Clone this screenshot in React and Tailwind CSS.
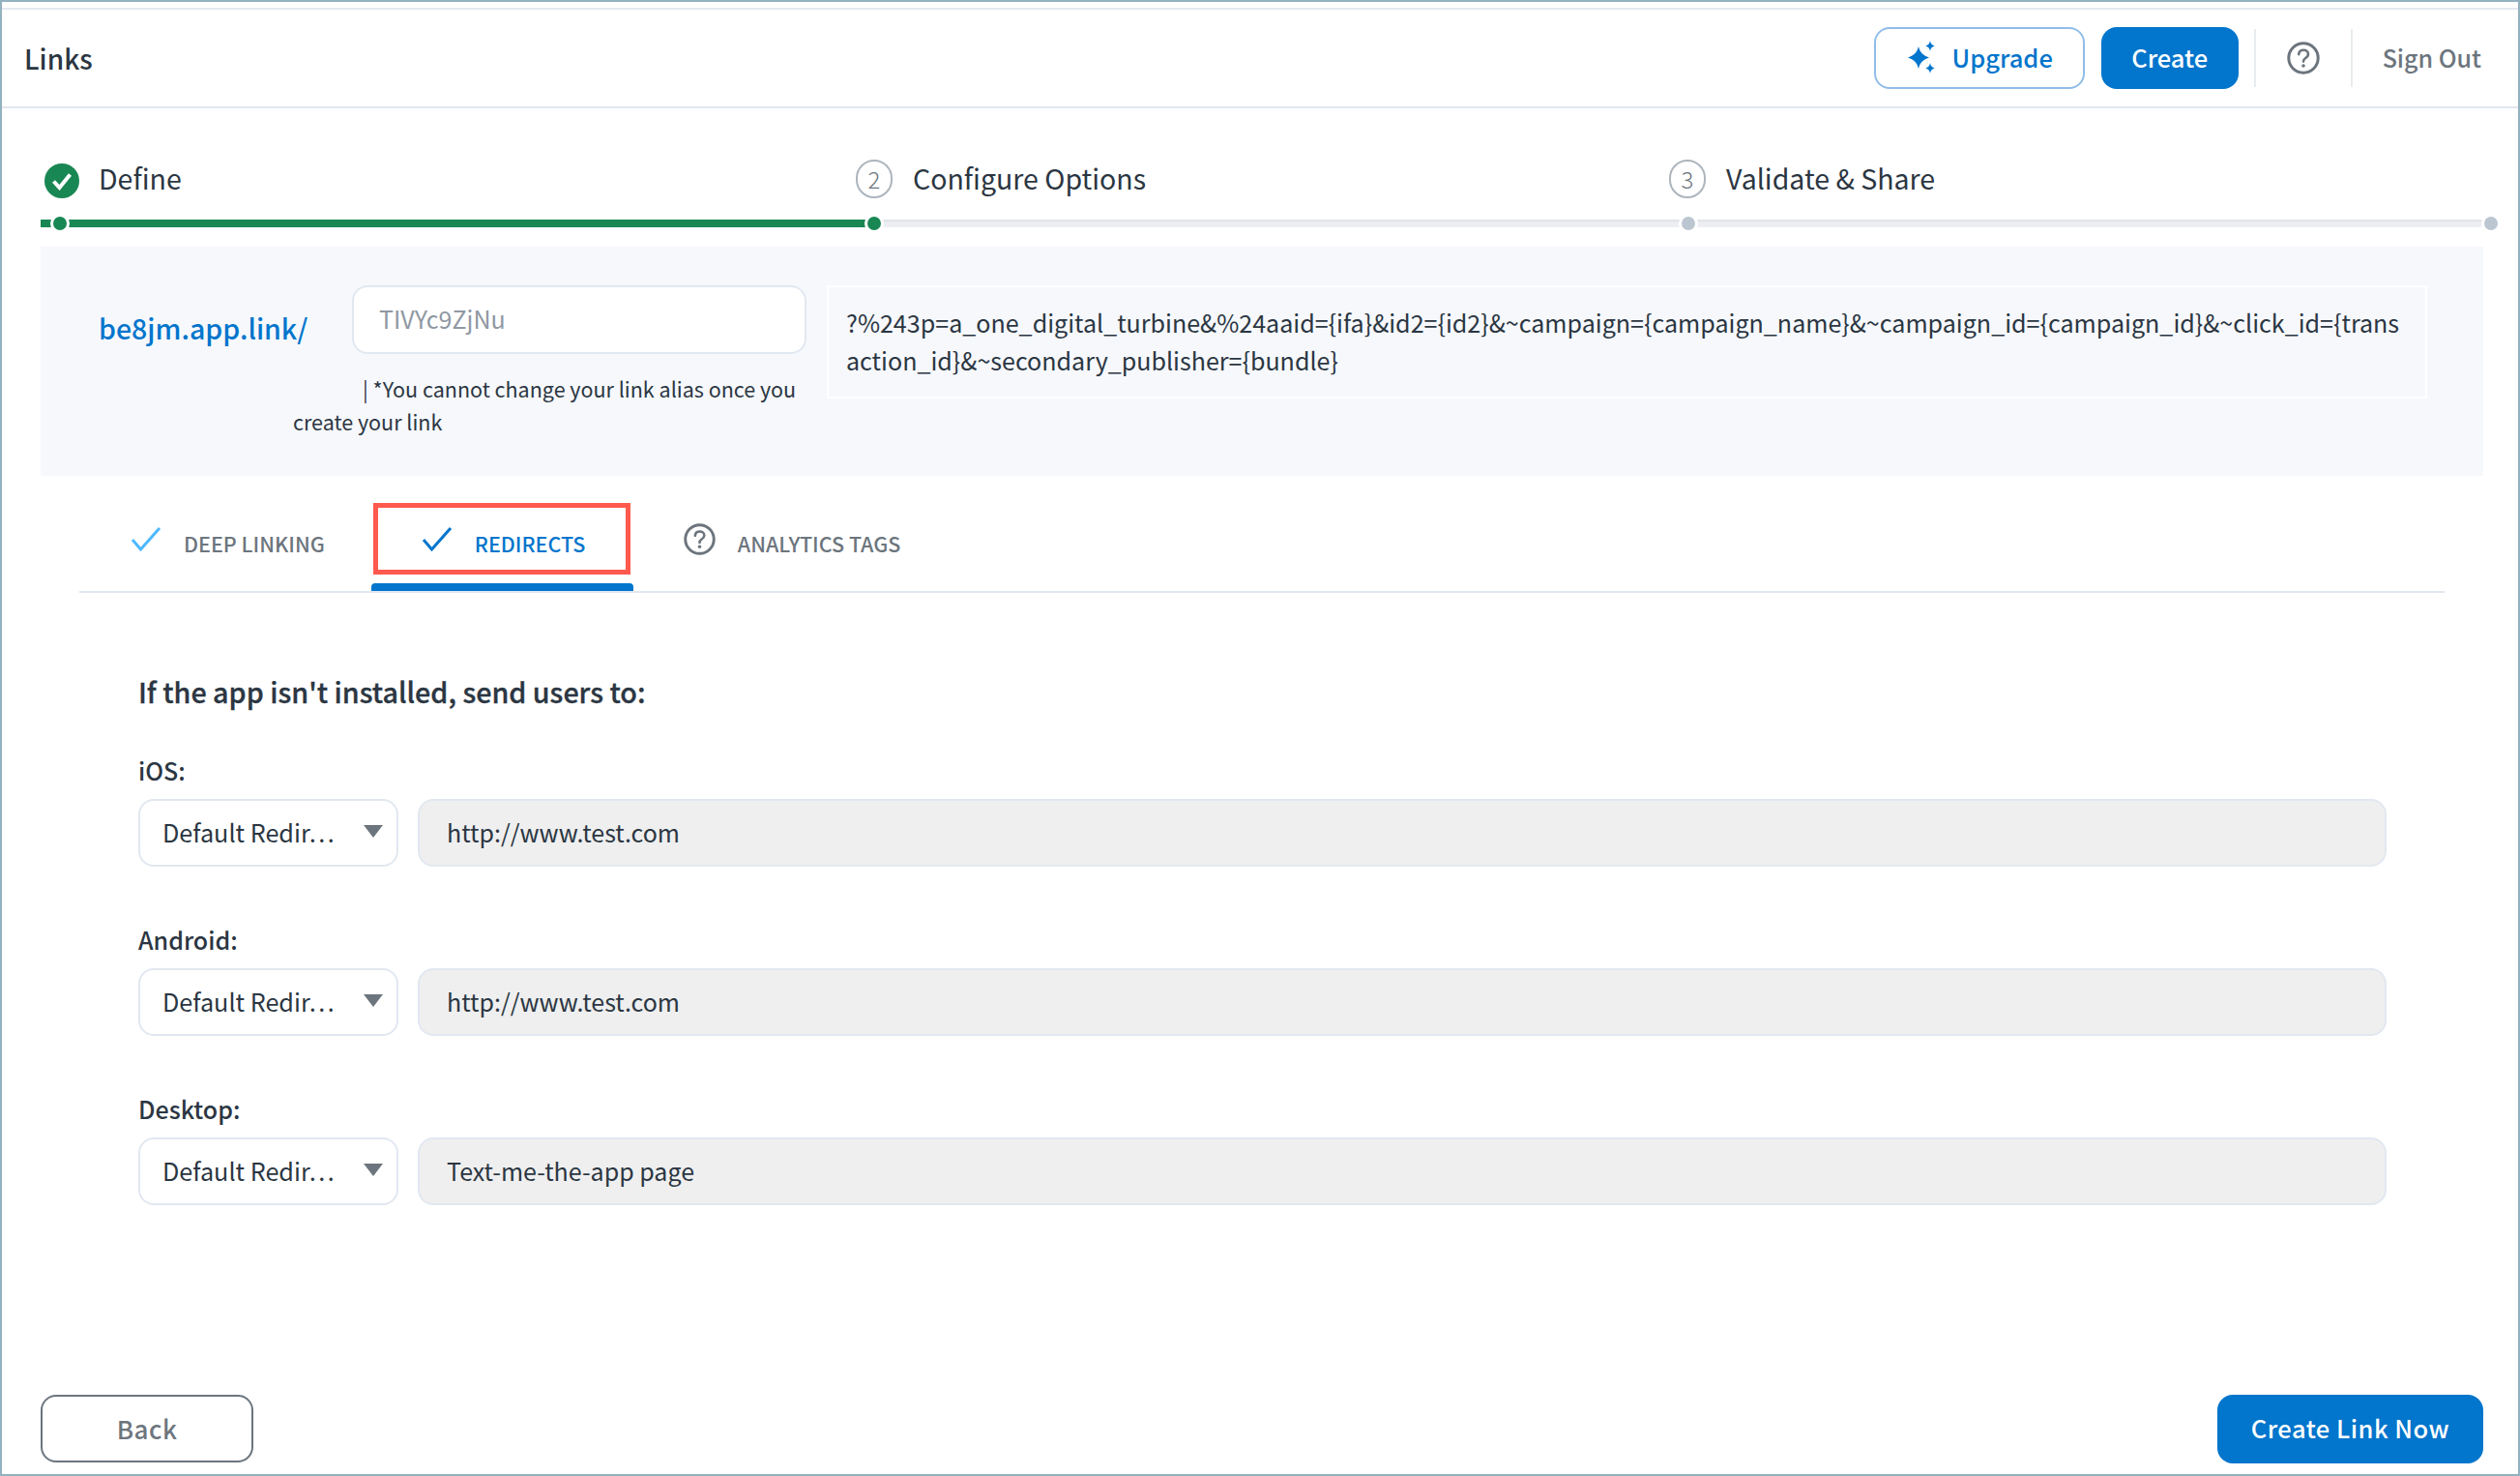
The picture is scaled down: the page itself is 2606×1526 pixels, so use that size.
import React from "react";

const URL_TEXT =
  "?%243p=a_one_digital_turbine&%24aaid={ifa}&id2={id2}&~campaign={campaign_name}&~campaign_id={campaign_id}&~click_id={transaction_id}&~secondary_publisher={bundle}";

function Sparkles() {
  return (
    <svg width="34" height="40" viewBox="0 0 34 40" className="shrink-0">
      <path d="M14 9 C15.5 15 18 18 25 20.5 C18 23 15.5 26 14 32 C12.5 26 10 23 3 20.5 C10 18 12.5 15 14 9 Z" fill="#0275cc" />
      <path d="M26 3 C26.7 6.5 28 7.6 31 8.5 C28 9.4 26.7 10.5 26 14 C25.3 10.5 24 9.4 21 8.5 C24 7.6 25.3 6.5 26 3 Z" fill="#0275cc" />
      <path d="M26 26 C26.7 29.5 28 30.6 31 31.5 C28 32.4 26.7 33.5 26 37 C25.3 33.5 24 32.4 21 31.5 C24 30.6 25.3 29.5 26 26 Z" fill="#0275cc" />
    </svg>
  );
}

function Help({ size = 34, className = "" }) {
  return (
    <svg width={size} height={size} viewBox="0 0 34 34" fill="none" className={`shrink-0 ${className}`}>
      <circle cx="17" cy="17" r="15.2" stroke="#6c757d" strokeWidth="3" />
      <path d="M12.2 13.2 C12.4 10.4 14.4 8.8 17.2 8.8 C20 8.8 22 10.5 22 13 C22 15 20.8 16 19.2 17 C17.8 17.9 17 18.8 17 20.6" stroke="#6c757d" strokeWidth="2.6" strokeLinecap="round" />
      <circle cx="17" cy="25" r="1.8" fill="#6c757d" />
    </svg>
  );
}

function Check({ color }) {
  return (
    <svg width="32" height="26" viewBox="0 0 32 26" fill="none" className="-mt-[10px] shrink-0">
      <path d="M2 14 L10.5 24 L30 2" stroke={color} strokeWidth="3" />
    </svg>
  );
}

function Step({ n, label, w }) {
  return (
    <div className={`flex items-center ${w}`}>
      <span className="flex h-[40px] w-[38px] items-center justify-center rounded-full border-2 border-[#adb5bd] text-[24px] font-light leading-none text-[#6c757d]">
        {n}
      </span>
      <span className="ml-[21px] pb-[3px] text-[28.5px] leading-[40px] text-[#2b3642]">{label}</span>
    </div>
  );
}

function Dot({ cls, left }) {
  return (
    <span
      className={`absolute top-[-3px] h-[14px] w-[14px] rounded-full ring-[3px] ring-white ${cls}`}
      style={{ left }}
    />
  );
}

function RedirectRow({ label, value }) {
  return (
    <div className="flex h-[175px] flex-col">
      <div className="h-[44px] text-[25px] font-medium leading-[28px] text-[#2b3642]">{label}</div>
      <div className="flex gap-[20px]">
        <div className="relative flex h-[70px] w-[269px] items-center rounded-[16px] border-2 border-[#e2e8f0] bg-white pl-[23px] text-[25.2px] text-[#2b3642]">
          Default Redir…
          <span className="absolute right-[14px] top-[25px] h-0 w-0 border-x-[10px] border-t-[13px] border-x-transparent border-t-[#6c757d]" />
        </div>
        <div className="flex h-[70px] w-[2036px] items-center rounded-[16px] border-2 border-[#e2e8f0] bg-[#efefef] pl-[28px] text-[25px] text-[#2b3642]">
          {value}
        </div>
      </div>
    </div>
  );
}

export default function App() {
  return (
    <div
      className="flex h-[1526px] w-[2606px] flex-col border-2 border-[#93b1bf] bg-white pt-[6px]"
      style={{ fontFamily: '"Noto Sans CJK JP", "Liberation Sans", sans-serif' }}
    >
      <header className="flex h-[104px] shrink-0 items-center border-y-2 border-[#e2e8f0] pl-[23px] pr-[38px]">
        <h1 className="text-[28px] font-medium leading-[40px] text-[#2b3642]">Links</h1>
        <div className="ml-auto flex items-center">
          <button className="flex h-[64px] w-[218px] items-center justify-center gap-[14px] rounded-[16px] border-2 border-[#90bde8] bg-white pb-[2px] text-[25.5px] font-medium text-[#0275cc]">
            <Sparkles />
            Upgrade
          </button>
          <button className="ml-[17px] h-[64px] w-[142px] rounded-[16px] bg-[#0275cc] pb-[2px] text-[25.5px] font-medium text-white">
            Create
          </button>
          <span className="ml-[16px] h-[60px] w-[2px] bg-[#e9ecef]" />
          <span className="flex w-[98px] justify-center">
            <Help />
          </span>
          <span className="h-[60px] w-[2px] bg-[#e9ecef]" />
          <span className="ml-[31px] text-[25px] font-medium text-[#6c757d]">Sign Out</span>
        </div>
      </header>

      <div className="flex min-h-0 flex-1 flex-col px-[40px] pb-[11px]">
        <div className="mt-[52px] flex h-[42px] items-center pl-[4px]">
          <div className="flex w-[839px] items-center">
            <svg width="36" height="36" viewBox="0 0 36 36" className="mt-[4px] shrink-0">
              <circle cx="18" cy="18" r="18" fill="#198754" />
              <path d="M9.5 18.5 L15.5 25 L26.5 11.5" stroke="#fff" strokeWidth="4" fill="none" />
            </svg>
            <span className="ml-[20px] pb-[3px] text-[28.5px] leading-[40px] text-[#2b3642]">Define</span>
          </div>
          <Step n="2" label="Configure Options" w="w-[841px]" />
          <Step n="3" label="Validate & Share" w="w-[700px]" />
        </div>

        <div className="relative mt-[21px] h-[8px] w-[2526px] rounded-full bg-[#eceef3] shadow-[inset_0_2px_2px_rgba(0,0,0,0.05)]">
          <div className="h-full w-[862px] bg-[#198754]" />
          <Dot cls="bg-[#198754]" left="13px" />
          <Dot cls="bg-[#198754]" left="855px" />
          <Dot cls="bg-[#bcc6d0]" left="1697px" />
          <Dot cls="bg-[#bcc6d0]" left="2527px" />
        </div>

        <section className="mt-[20px] flex h-[237px] w-[2526px] shrink-0 items-start bg-[#f6f8fc] pt-[40px]">
          <div className="mt-[19px] w-[322px] shrink-0 pl-[60px] text-[28.5px] font-medium leading-[50px] text-[#0275cc]">
            be8jm.app.link/
          </div>
          <div className="w-[470px] shrink-0">
            <div className="flex h-[71px] items-center rounded-[16px] border-2 border-[#e2e8f0] bg-white pb-[2px] pl-[26px] text-[25px] text-[#8f98a3]">
              TIVYc9ZjNu
            </div>
            <p className="ml-[-61px] mt-[19px] w-[530px] indent-[72px] text-[21.5px] leading-[34px] text-[#2b3642]">
              | *You cannot change your link alias once you create your link
            </p>
          </div>
          <div className="ml-[21px] h-[117px] w-[1655px] shrink-0 border-2 border-white px-[18px] pb-[20px] pt-[17px] text-[25.07px] leading-[39px] break-all text-[#2b3642]">
            {URL_TEXT}
          </div>
        </section>

        <nav className="relative ml-[40px] mt-[28px] flex h-[93px] w-[2446px] items-start border-b-2 border-[#e2e8f0]">
          <div className="flex h-[74px] items-center pl-[53px] pt-[10px]">
            <Check color="#4db8ff" />
            <span className="ml-[23px] text-[21.5px] font-medium text-[#6c757d]">DEEP LINKING</span>
          </div>
          <div className="ml-[50px] flex h-[74px] w-[266px] items-center border-[5px] border-[#ff5a4d] pl-[45px] pt-[10px]">
            <Check color="#0275cc" />
            <span className="ml-[23px] text-[21.5px] font-medium text-[#0275cc]">REDIRECTS</span>
          </div>
          <div className="ml-[55px] flex h-[74px] items-center pt-[10px]">
            <Help size={33} className="-mt-[10px]" />
            <span className="ml-[23px] text-[21.5px] font-medium text-[#6c757d]">ANALYTICS TAGS</span>
          </div>
          <span className="absolute bottom-0 left-[302px] h-[8px] w-[271px] rounded-t-[4px] bg-[#0275cc]" />
        </nav>

        <main className="ml-[101px] flex flex-col">
          <h2 className="mt-[82px] h-[87px] text-[28.7px] font-medium leading-[40px] text-[#2b3642] [-webkit-text-stroke:0.3px_#2b3642]">
            If the app isn't installed, send users to:
          </h2>
          <RedirectRow label="iOS:" value="http://www.test.com" />
          <RedirectRow label="Android:" value="http://www.test.com" />
          <RedirectRow label="Desktop:" value="Text-me-the-app page" />
        </main>

        <footer className="mt-auto flex w-[2526px] items-start justify-between">
          <button className="h-[70px] w-[220px] rounded-[16px] border-2 border-[#6c757d] bg-white pb-[2px] text-[26px] font-medium tracking-[0.5px] text-[#6c757d]">
            Back
          </button>
          <button className="h-[71px] w-[275px] rounded-[16px] bg-[#0275cc] pb-[2px] text-[25.5px] font-medium tracking-[0.5px] text-white">
            Create Link Now
          </button>
        </footer>
      </div>
    </div>
  );
}
